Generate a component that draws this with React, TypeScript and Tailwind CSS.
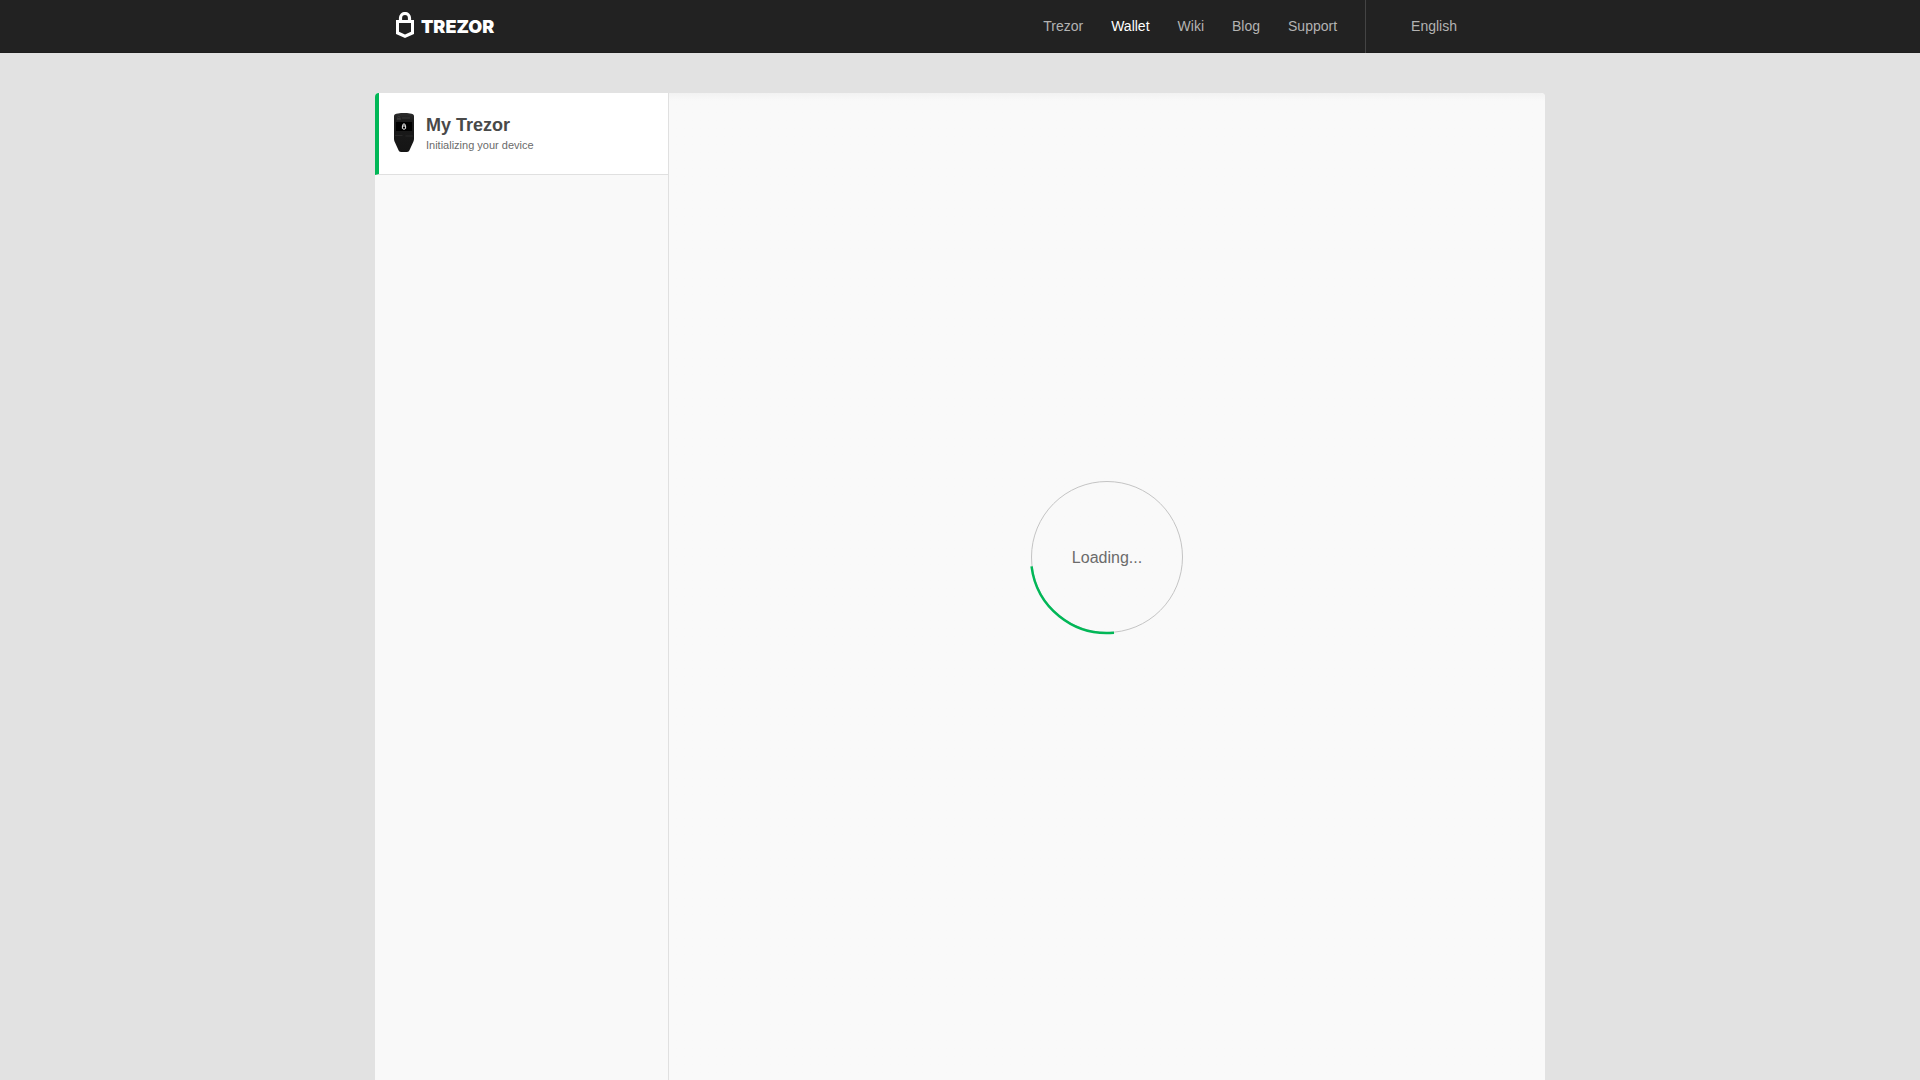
interface NavItem {
  label: string
  href: string
  active?: boolean
}

const NAV_ITEMS: NavItem[] = [
  { label: 'Trezor', href: '#trezor' },
  { label: 'Wallet', href: '#wallet', active: true },
  { label: 'Wiki', href: '#wiki' },
  { label: 'Blog', href: '#blog' },
  { label: 'Support', href: '#support' },
]

function LockIcon() {
  return (
    <svg width="18" height="26" viewBox="0 0 18 26" fill="none" aria-hidden="true">
      <path d="M4.5 9.5V6a4.5 4.5 0 0 1 9 0v3.5" stroke="#fff" strokeWidth="3.2" />
      <path
        fill="#fff"
        fillRule="evenodd"
        d="M0 8h18v14L9 26l-9-4V8Zm3 3v8.800l6 2.700 6-2.700V11H3Z"
      />
    </svg>
  )
}

function DeviceIcon() {
  return (
    <svg width="20" height="39" viewBox="0 0 20 39" fill="none" aria-hidden="true">
      <defs>
        <linearGradient id="device-body" x1="0" y1="0" x2="0" y2="1">
          <stop offset="0" stopColor="#2c2c2c" />
          <stop offset="0.2" stopColor="#1b1b1b" />
          <stop offset="1" stopColor="#151515" />
        </linearGradient>
      </defs>
      <path
        fill="url(#device-body)"
        d="M0 3C0 1.2 1.5.8 4 .4 8 0 12 0 16 .4c2.500.4 4 .8 4 2.600v22.500c0 1.500-.3 2.500-1 4L15.800 36.500C15 38.300 14.300 39 13 39H7c-1.300 0-2-.7-2.800-2.500L1 29.500c-.7-1.500-1-2.500-1-4V3Z"
      />
      <path d="M3.800 5.500V4.200a1 1 0 0 1 2 0v1.300M3.200 5.500h3.200v1.200H3.200zM8 5h8" stroke="#3d3d3d" strokeWidth="0.8" />
      <path fill="#000" d="M2 9h16v9H2z" />
      <path d="M8.700 13v-.8a1.300 1.300 0 0 1 2.600 0v.8" stroke="#eee" />
      <path d="M8.400 13h3.200v2.500l-1.600.8-1.600-.8V13Z" stroke="#eee" />
      <path d="M1 22.500h7.500M11.500 23h7.500" stroke="#2d2d2d" strokeWidth="0.8" />
    </svg>
  )
}

function Header() {
  return (
    <header className="bg-[#222] shadow-[inset_0_-1px_#1e1e1e]">
      <div className="mx-auto flex h-[53px] max-w-[1170px] items-stretch justify-between pr-[88px] pl-[21px]">
        <a href="#home" className="flex items-center gap-[7px] pb-[3px] text-white">
          <LockIcon />
          <span className="pt-1 font-['Inter','Lato',sans-serif] text-lg leading-6 font-black">TREZOR</span>
        </a>
        <div className="flex items-stretch text-sm">
          <nav className="flex items-center gap-7 border-r border-[#444] pr-7 pb-px">
            {NAV_ITEMS.map((item) => (
              <a
                key={item.href}
                href={item.href}
                className={item.active ? 'text-white' : 'text-[#b3b3b3] hover:text-white'}
              >
                {item.label}
              </a>
            ))}
          </nav>
          <button type="button" className="pb-px pl-[45px] text-[#b3b3b3] hover:text-white">
            English
          </button>
        </div>
      </div>
    </header>
  )
}

function Sidebar() {
  return (
    <aside className="w-[294px] shrink-0 border-r border-[#e0e0e0]">
      <a
        href="#device"
        className="flex h-[82px] items-center gap-3 rounded-tl border-b border-l-4 border-b-[#e0e0e0] border-l-[#01b757] bg-white pb-0.5 pl-[15px]"
      >
        <DeviceIcon />
        <div>
          <h1 className="text-lg leading-6 font-bold text-[#494949]">My Trezor</h1>
          <p className="text-[11px] leading-4 text-[#6b6b6b]">Initializing your device</p>
        </div>
      </a>
    </aside>
  )
}

function Loader() {
  return (
    <div className="relative" role="status">
      <svg width="154" height="154" viewBox="0 0 154 154" fill="none" className="overflow-visible" aria-hidden="true">
        <circle cx="77" cy="77" r="75.5" stroke="#c4c4c4" />
        <path d="M1.560 86.300A76 76 0 0 0 84 152.700" stroke="#01b757" strokeWidth="2.5" />
      </svg>
      <span className="absolute inset-0 flex items-center justify-center pt-0.5 text-base text-[#6b6b6b]">
        Loading...
      </span>
    </div>
  )
}

export default function App() {
  return (
    <div className="flex min-h-screen flex-col bg-[#e2e2e2] font-['Liberation_Sans',Arial,sans-serif]">
      <Header />
      <div className="mx-auto mt-10 flex w-full max-w-[1170px] flex-1 rounded-t bg-[#f9f9f9]">
        <Sidebar />
        <main className="flex flex-1 items-center justify-center rounded-tr bg-linear-to-b from-[#f2f2f2] to-[#f9f9f9] to-[8px] pb-[59px]">
          <Loader />
        </main>
      </div>
    </div>
  )
}
